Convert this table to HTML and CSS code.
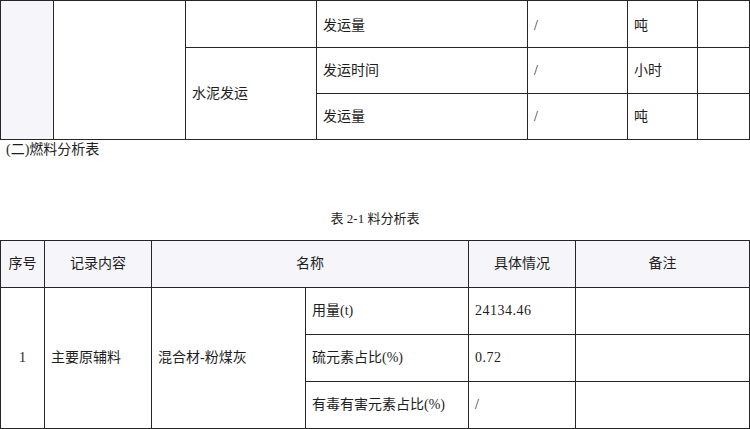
FILE: index.html
```html
<!DOCTYPE html>
<html lang="zh-CN">
<head>
<meta charset="utf-8">
<title>燃料分析表</title>
<link rel="stylesheet" href="styles.css">
</head>
<body>
<table class="grid top">
  <colgroup>
    <col class="c53"><col class="c132"><col class="c131"><col class="c211"><col class="c100"><col class="c70"><col class="c52">
  </colgroup>
  <tr class="first">
    <td class="shade" rowspan="3"></td>
    <td rowspan="3"></td>
    <td></td>
    <td>发运量</td>
    <td>/</td>
    <td>吨</td>
    <td></td>
  </tr>
  <tr>
    <td rowspan="2">水泥发运</td>
    <td>发运时间</td>
    <td>/</td>
    <td>小时</td>
    <td></td>
  </tr>
  <tr>
    <td>发运量</td>
    <td>/</td>
    <td>吨</td>
    <td></td>
  </tr>
</table>
<p class="section">(二)燃料分析表</p>
<p class="caption">表 2-1 料分析表</p>
<table class="grid bottom">
  <colgroup>
    <col class="b44"><col class="b107"><col class="b154"><col class="b163"><col class="b107"><col class="b174">
  </colgroup>
  <tr class="head">
    <th>序号</th>
    <th>记录内容</th>
    <th colspan="2">名称</th>
    <th>具体情况</th>
    <th>备注</th>
  </tr>
  <tr>
    <td class="center" rowspan="3">1</td>
    <td rowspan="3">主要原辅料</td>
    <td rowspan="3">混合材-粉煤灰</td>
    <td>用量(t)</td>
    <td class="num">24134.46</td>
    <td></td>
  </tr>
  <tr>
    <td>硫元素占比(%)</td>
    <td class="num">0.72</td>
    <td></td>
  </tr>
  <tr>
    <td>有毒有害元素占比(%)</td>
    <td class="num">/</td>
    <td></td>
  </tr>
</table>
</body>
</html>
```
FILE: styles.css
```css
html, body {
  margin: 0;
  padding: 0;
  background: #fff;
}
body {
  width: 750px;
  font-family: "Liberation Serif", "Noto Sans CJK SC", serif;
  font-size: 14px;
  color: #1e1e1e;
}
.grid {
  width: 749px;
  border-collapse: collapse;
  table-layout: fixed;
}
.grid td, .grid th {
  border: 1px solid #262626;
  padding: 0 6px;
  text-align: left;
  vertical-align: middle;
  font-weight: normal;
  line-height: 20px;
}
.top tr { height: 46px; }
.top tr.first { height: 47px; }
.top tr.first td { padding-top: 4px; }
.top .shade { background: #f6f6fa; }
.c53 { width: 53px; }
.c132 { width: 132px; }
.c131 { width: 131px; }
.c211 { width: 211px; }
.c100 { width: 100px; }
.c70 { width: 70px; }
.c52 { width: 52px; }

.section {
  margin: 0;
  padding-left: 6px;
  line-height: 20px;
}
.caption {
  margin: 49px 0 0;
  text-align: center;
  font-size: 13px;
  line-height: 20px;
}
.bottom { margin-top: 11px; }
.bottom tr { height: 47px; }
.bottom .head th {
  background: #f6f6fa;
  text-align: center;
}
.bottom .center { text-align: center; }
.num { letter-spacing: 0.5px; }
.b44 { width: 44px; }
.b107 { width: 107px; }
.b154 { width: 154px; }
.b163 { width: 163px; }
.b174 { width: 174px; }
```
